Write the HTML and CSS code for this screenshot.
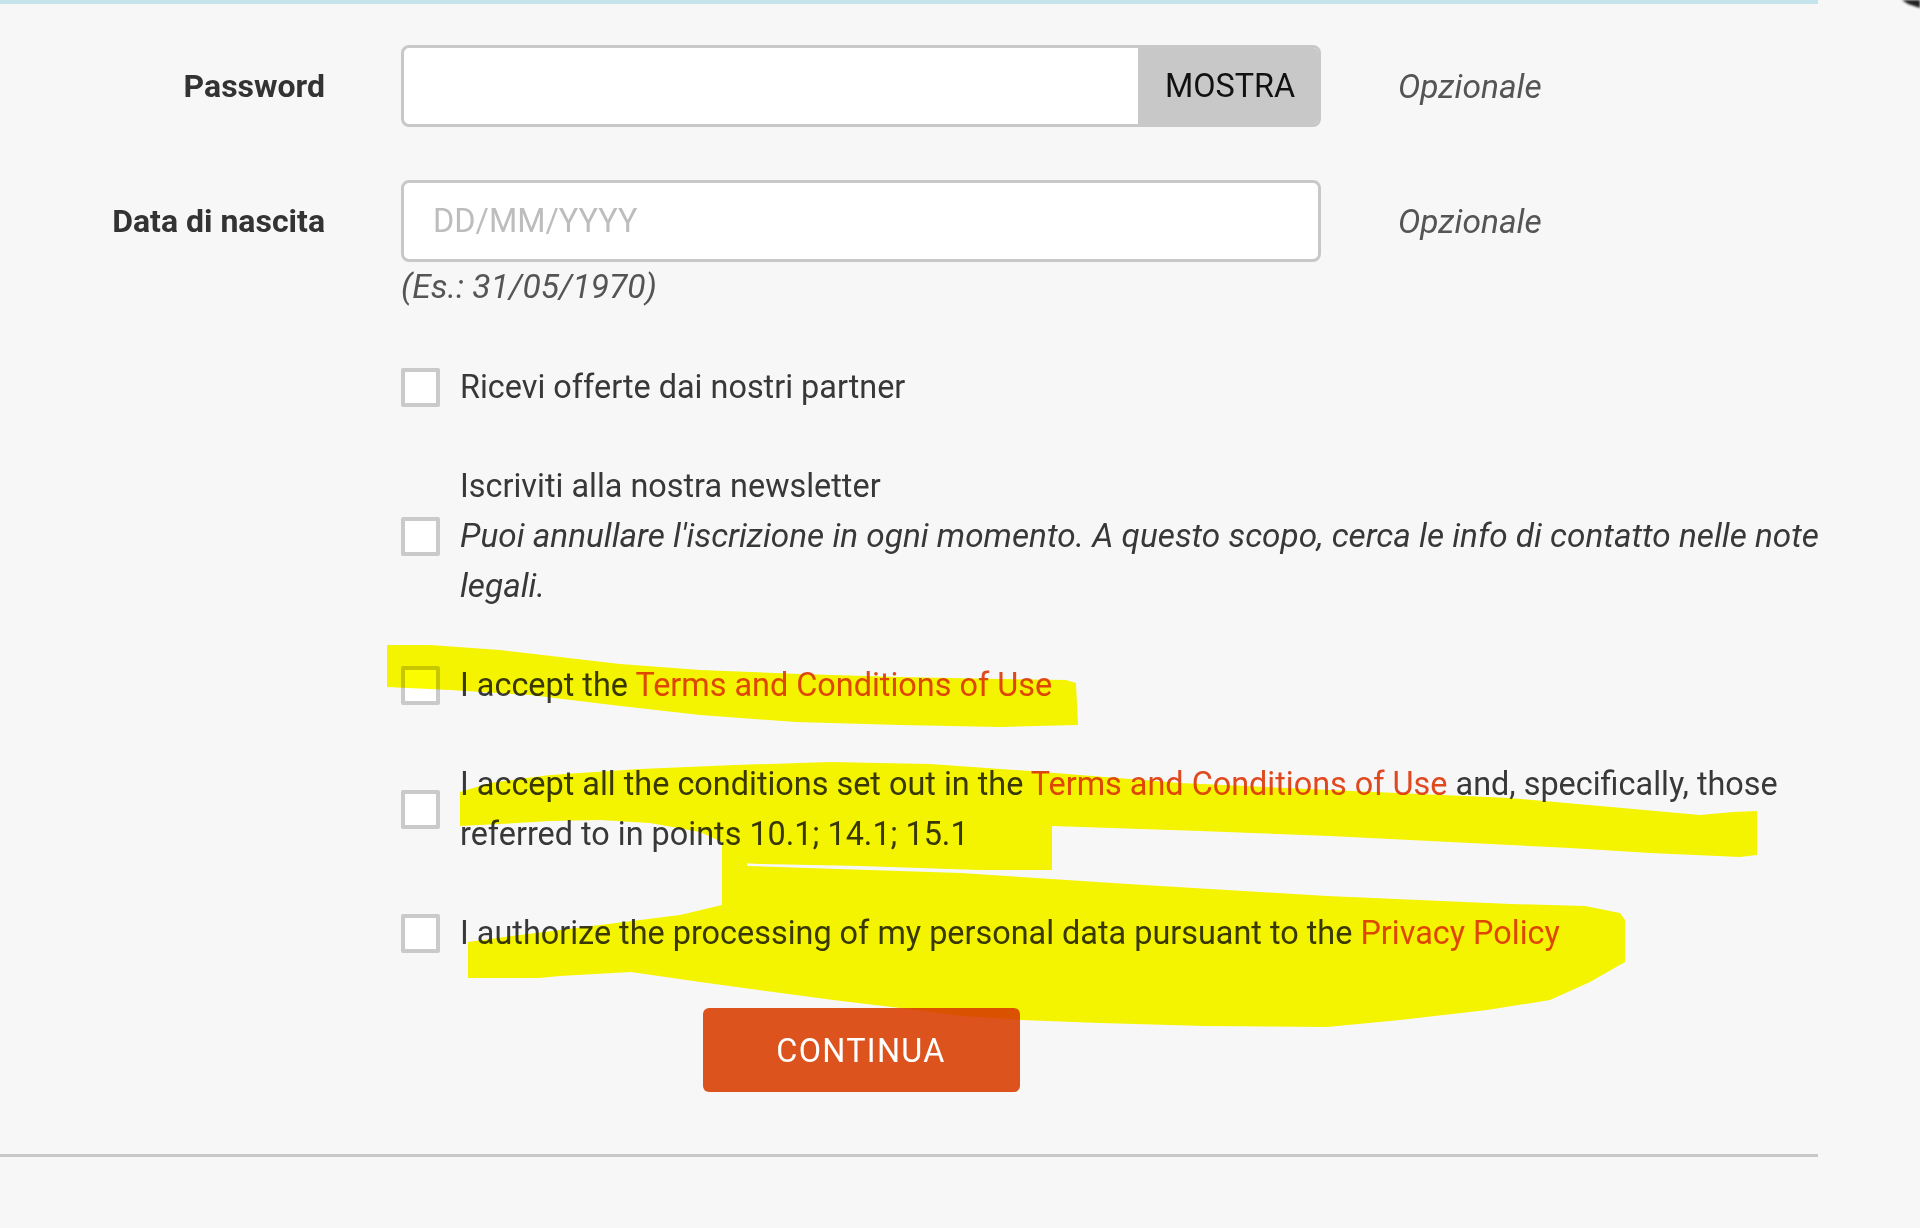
FILE: index.html
```html
<!DOCTYPE html>
<html lang="it">
<head>
<meta charset="utf-8">
<title>Registrazione</title>
<link rel="stylesheet" href="styles.css">
</head>
<body>
<div class="page">
  <form class="form">
    <div class="row">
      <label class="label" for="pw">Password</label>
      <div class="field">
        <div class="input-group">
          <input class="input" id="pw" type="password">
          <button class="show" type="button">MOSTRA</button>
        </div>
      </div>
      <span class="optional">Opzionale</span>
    </div>
    <div class="row">
      <label class="label" for="dob">Data di nascita</label>
      <div class="field">
        <div class="input-group">
          <input class="input" id="dob" type="text" placeholder="DD/MM/YYYY">
        </div>
      </div>
      <span class="optional">Opzionale</span>
    </div>
    <div class="hint">(Es.: 31/05/1970)</div>

    <div class="checks">
      <label class="check">
        <input class="box" type="checkbox">
        <span class="check-text">Ricevi offerte dai nostri partner</span>
      </label>
      <label class="check">
        <input class="box" type="checkbox">
        <span class="check-text">Iscriviti alla nostra newsletter<span class="note">Puoi annullare l'iscrizione in ogni momento. A questo scopo, cerca le info di contatto nelle note legali.</span></span>
      </label>
      <label class="check">
        <input class="box" type="checkbox">
        <span class="check-text">I accept the <a class="link" href="#">Terms and Conditions of Use</a></span>
      </label>
      <label class="check">
        <input class="box" type="checkbox">
        <span class="check-text">I accept all the conditions set out in the <a class="link" href="#">Terms and Conditions of Use</a> and, specifically, those referred to in points 10.1; 14.1; 15.1</span>
      </label>
      <label class="check">
        <input class="box" type="checkbox">
        <span class="check-text">I authorize the processing of my personal data pursuant to the <a class="link" href="#">Privacy Policy</a></span>
      </label>
    </div>

    <div class="actions">
      <button class="continue" type="button">CONTINUA</button>
    </div>
  </form>
</div>

<svg class="marker" width="1920" height="1228" viewBox="0 0 1920 1228" aria-hidden="true">
  <path d="M387,645 L430,645 L500,650 L560,657 L620,664 L700,670 L800,674 L900,677 L1000,679 L1066,680 L1076,683 L1078,725 L1000,727 L900,725 L796,722 L700,715 L612,705 L530,695 L450,690 L387,687 Z"/>
  <path d="M460,792 L490,783 L550,775 L640,769 L735,765 L830,762 L930,764 L1030,771 L1180,783 L1330,790 L1510,798 L1600,806 L1700,815 L1733,812 L1757,811 L1757,855 L1740,857 L1650,853 L1570,848 L1450,842 L1330,836 L1200,831 L1052,826 L1052,870 L980,870 L860,866 L760,864 L722,862 L722,842 L700,832 L650,823 L600,820 L550,821 L500,824 L460,826 Z"/>
  <path d="M722,847 L747,848 L747,866 L960,873 L1144,885 L1327,896 L1511,904 L1585,906 L1620,913 L1625,920 L1625,962 L1590,982 L1550,1000 L1487,1010 L1400,1020 L1327,1027 L1205,1026 L1100,1023 L1021,1020 L960,1016 L900,1008 L833,1000 L796,995 L700,982 L631,972 L560,976 L539,978 L468,978 L468,942 L520,935 L600,925 L680,915 L722,905 Z"/>
</svg>
<svg class="cursor" width="20" height="10" viewBox="0 0 20 10" aria-hidden="true">
  <path d="M2,0 L20,0 L20,8 L14,6 L8,4 Z"/>
</svg>
</body>
</html>
```

FILE: styles.css
```css
* {
  box-sizing: border-box;
}

html,
body {
  margin: 0;
  background: #f7f7f7;
}

body {
  position: relative;
  min-height: 1228px;
  font-family: Roboto, "Noto Sans", "Liberation Sans", sans-serif;
  font-size: 32.4px;
  color: #383838;
}

.page {
  width: 1818px;
  border-top: 4px solid #c5e3ea;
  border-bottom: 3px solid #c8c8c8;
}

.form {
  padding: 41px 0 62px;
}

.row {
  display: flex;
  align-items: center;
  height: 82px;
}

.row + .row {
  margin-top: 53px;
}

.label {
  width: 325px;
  margin-right: 76px;
  text-align: right;
  font-size: 32px;
  font-weight: 700;
  color: #333;
}

.field {
  width: 920px;
  height: 82px;
}

.input-group {
  display: flex;
  height: 100%;
  border: 3px solid #c8c8c8;
  border-radius: 8px;
  background: #fff;
  overflow: hidden;
}

.input {
  flex: 1;
  min-width: 0;
  border: 0;
  outline: 0;
  padding: 0 29px;
  background: transparent;
  font: inherit;
  color: #383838;
}

.input::placeholder {
  color: #bdbdbd;
}

.show {
  width: 180px;
  padding: 0 0 0 4px;
  border: 0;
  background: #c8c8c8;
  font: inherit;
  color: #111;
}

.optional {
  margin-left: 77px;
  font-size: 33.5px;
  font-style: italic;
  color: #555;
}

.hint {
  margin-left: 401px;
  line-height: 50px;
  font-size: 33.6px;
  font-style: italic;
  color: #555;
}

.checks {
  display: flex;
  flex-direction: column;
  gap: 49px;
  margin: 50px 0 0 401px;
}

.check {
  display: flex;
  align-items: center;
  gap: 20px;
  line-height: 50px;
}

.box {
  appearance: none;
  -webkit-appearance: none;
  flex: none;
  width: 39px;
  height: 39px;
  margin: 0;
  border: 4px solid #cacaca;
  border-radius: 2px;
  background: #fff;
}

.check-text {
  flex: none;
  width: 1400px;
}

.note {
  display: block;
  font-size: 33.35px;
  font-style: italic;
}

.link {
  color: #e0481f;
  text-decoration: none;
}

.actions {
  display: flex;
  justify-content: center;
  width: 920px;
  margin: 50px 0 0 401px;
}

.continue {
  width: 317px;
  height: 84px;
  padding-top: 2px;
  border: 0;
  border-radius: 6px;
  background: #dd531e;
  font: inherit;
  letter-spacing: 1.3px;
  color: #fff;
}

.marker {
  position: absolute;
  top: 0;
  left: 0;
  pointer-events: none;
  mix-blend-mode: multiply;
  fill: #fcfc00;
}

.cursor {
  position: absolute;
  top: 0;
  right: 0;
  fill: #222;
  filter: blur(1px);
}
```
